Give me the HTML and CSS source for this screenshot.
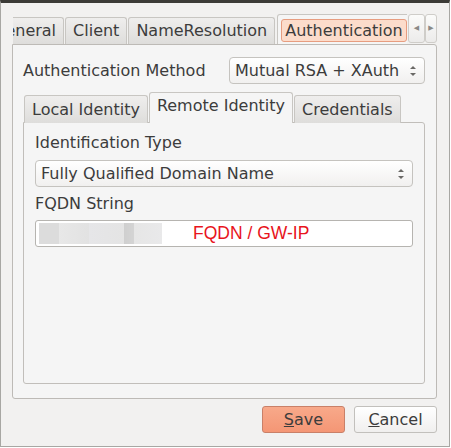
FILE: index.html
```html
<!DOCTYPE html>
<html lang="en">
<head>
    <meta charset="UTF-8">
    <title>VPN Connection - Authentication</title>
    <link rel="stylesheet" href="styles.css">
</head>
<body>
    <div class="window">
        <div class="tabbar">
            <div class="tab-clip">
                <div class="tab first">General</div>
                <div class="tab">Client</div>
                <div class="tab">NameResolution</div>
                <div class="tab active"><span class="focus">Authentication</span></div>
            </div>
            <div class="scroll-btn">&#9664;</div>
            <div class="scroll-btn">&#9654;</div>
        </div>

        <div class="pane">
            <div class="row">
                <span class="label">Authentication Method</span>
                <div class="combo method">Mutual RSA + XAuth<span class="spin"></span></div>
            </div>

            <div class="subtabs">
                <div class="tab">Local Identity</div>
                <div class="tab active">Remote Identity</div>
                <div class="tab">Credentials</div>
            </div>

            <div class="subpane">
                <div class="label">Identification Type</div>
                <div class="combo">Fully Qualified Domain Name<span class="spin"></span></div>
                <div class="label second">FQDN String</div>
                <div class="entry">
                    <span class="blur"></span>
                    <span class="hint">FQDN / GW-IP</span>
                </div>
            </div>
        </div>

        <div class="buttons">
            <button class="btn save"><u>S</u>ave</button>
            <button class="btn"><u>C</u>ancel</button>
        </div>
    </div>
</body>
</html>
```

FILE: styles.css
```css
body {
    margin: 0;
    background: #ffffff;
    font-family: "DejaVu Sans", sans-serif;
    font-size: 16px;
    color: #3c3c3c;
}
.window {
    width: 448px;
    height: 443px;
    background: #f2f1f0;
    border-top: 3px solid #3c3b37;
    border-left: 1px solid #a8a7a3;
    border-right: 1px solid #a8a7a3;
    border-bottom: 1px solid #a8a7a3;
    display: flex;
    flex-direction: column;
}

/* outer notebook tabs */
.tabbar {
    display: flex;
    align-items: flex-end;
    height: 41px;
    margin-left: 12px;
}
.tab-clip {
    display: flex;
    align-items: flex-end;
    width: 394px;
    overflow: hidden;
}
.tab {
    flex: none;
    height: 26px;
    line-height: 26px;
    padding: 0 7px;
    background: linear-gradient(#efeeed, #dedddb);
    border: 1px solid #c8c6c2;
    border-bottom: none;
    border-radius: 3px 3px 0 0;
    margin-right: 1px;
    white-space: nowrap;
}
.tab.first {
    margin-left: -28px;
}
.tab.active {
    height: 25px;
    padding: 4px 3px 0 3px;
    line-height: normal;
    background: #f5f5f5;
    margin-left: 1px;
    margin-right: 0;
}
.focus {
    display: block;
    height: 21px;
    line-height: 22px;
    padding: 0 3px;
    background: #fcdccb;
    border: 1px solid #e79d80;
    border-radius: 3px;
}
.scroll-btn {
    flex: none;
    height: 27px;
    width: 15px;
    margin-left: 1px;
    margin-bottom: 1px;
    border: 1px solid #cfcdc9;
    border-radius: 3px;
    background: linear-gradient(#fbfbfa, #ecebea);
    color: #8a8986;
    font-size: 7px;
    line-height: 27px;
    text-align: center;
}
.scroll-btn + .scroll-btn {
    margin-left: 0;
    width: 10px;
}

/* outer pane */
.pane {
    margin-left: 11px;
    width: 402px;
    height: 326px;
    padding: 12px 11px 15px 10px;
    background: #f5f5f5;
    border: 1px solid #bdbab6;
    border-radius: 0 3px 3px 3px;
}
.row {
    display: flex;
    align-items: center;
    justify-content: space-between;
}
.combo {
    position: relative;
    height: 25px;
    line-height: 25px;
    padding: 0 5px;
    background: linear-gradient(#ffffff, #f1f0ef);
    border: 1px solid #c5c3bf;
    border-radius: 4px;
}
.combo.method {
    width: 184px;
}
.spin::before,
.spin::after {
    content: "";
    position: absolute;
    right: 8px;
    border-left: 3px solid transparent;
    border-right: 3px solid transparent;
}
.spin::before {
    top: 8px;
    border-bottom: 3px solid #6a6966;
}
.spin::after {
    top: 15px;
    border-top: 3px solid #6a6966;
}

/* inner notebook */
.subtabs {
    display: flex;
    align-items: flex-end;
    margin-top: 8px;
    margin-left: 1px;
    height: 31px;
}
.subtabs .tab {
    height: 27px;
    line-height: 27px;
}
.subtabs .tab.active {
    height: 30px;
    padding: 0 7px;
    line-height: 25px;
    margin-left: 0;
    margin-right: 1px;
}
.subpane {
    margin-top: -1px;
    height: 254px;
    padding: 6px 11px 0 11px;
    background: #f5f5f5;
    border: 1px solid #c1beba;
    border-radius: 0 3px 3px 3px;
}
.subpane .label {
    height: 26px;
    line-height: 28px;
}
.subpane .label.second {
    height: 24px;
    line-height: 26px;
}
.subpane .combo {
    margin: 5px 0 4px 0;
}
.entry {
    margin-top: 5px;
    height: 25px;
    display: flex;
    align-items: center;
    background: #ffffff;
    border: 1px solid #b6b4b0;
    border-radius: 3px;
}
.blur {
    width: 123px;
    height: 21px;
    margin-left: 3px;
    background: linear-gradient(90deg, #dcdcdc 0, #dcdcdc 20px, #e8e8e8 20px, #e2e2e2 50px, #e6e6e8 50px, #e4e4e4 85px, #cfcfcf 85px, #d4d4d4 95px, #e6e6e6 95px, #e9e9ea 123px);
}
.hint {
    margin-left: 31px;
    color: #e8141c;
    font-family: "Liberation Sans", Arial, sans-serif;
    font-size: 17.5px;
    line-height: 25px;
}

/* dialog buttons */
.buttons {
    display: flex;
    justify-content: flex-end;
    gap: 9px;
    padding: 7px 12px 0 0;
}
.btn {
    width: 83px;
    height: 27px;
    font-family: "DejaVu Sans", sans-serif;
    font-size: 16px;
    color: #3c3c3c;
    background: linear-gradient(#ffffff, #f0efee);
    border: 1px solid #c2c0bc;
    border-radius: 3px;
    padding: 0;
}
.btn.save {
    background: linear-gradient(#f8a98a, #f49675);
    border-color: #c98068;
}
```
